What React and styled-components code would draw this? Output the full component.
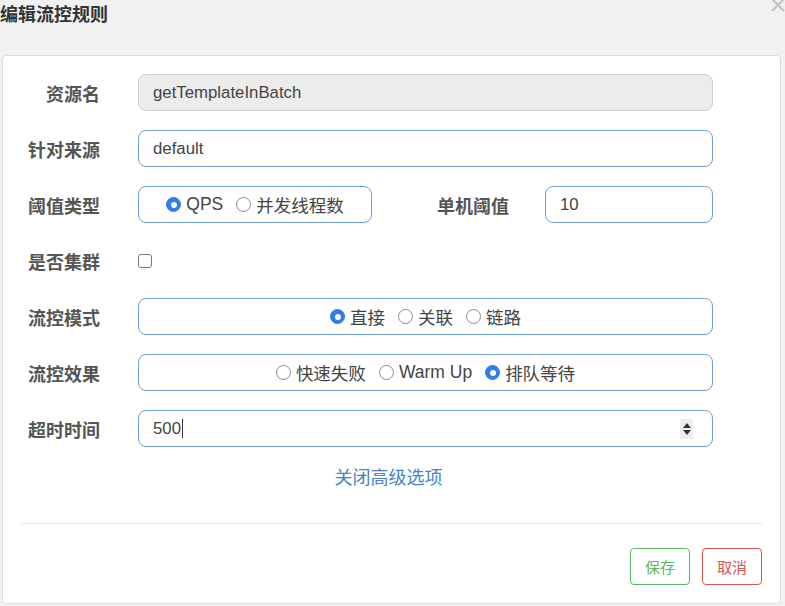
import React from "react";
import styled, { createGlobalStyle } from "styled-components";

const GlobalStyle = createGlobalStyle`
  html, body {
    margin: 0;
    padding: 0;
    background: #f1f1f1;
    font-family: "Liberation Sans", "Noto Sans CJK SC", sans-serif;
  }
`;

const Modal = styled.div`
  position: relative;
  width: 785px;
  height: 606px;
  overflow: hidden;
`;

const Header = styled.div`
  height: 55px;
  display: flex;
  align-items: flex-start;
  padding-top: 5px;
  box-sizing: border-box;
`;

const Title = styled.h1`
  margin: 0;
  font-size: 18px;
  font-weight: 700;
  color: #333;
  line-height: 21px;
`;

const Close = styled.svg`
  position: absolute;
  top: -3px;
  right: -1px;
  width: 16px;
  height: 16px;
`;

const Card = styled.div`
  margin-left: 2px;
  width: 779px;
  height: 549px;
  box-sizing: border-box;
  background: #fff;
  border: 1px solid #dcdcdc;
  border-radius: 4px;
  padding-top: 18px;
  display: flex;
  flex-direction: column;
`;

const Form = styled.div`
  display: flex;
  flex-direction: column;
  gap: 19px;
`;

const Row = styled.div`
  display: flex;
  align-items: center;
  height: 37px;
  padding-right: 67px;
`;

const Label = styled.label`
  width: ${(p) => p.$width || 97}px;
  flex: none;
  text-align: right;
  margin-right: ${(p) => p.$gap || 38}px;
  font-size: 18px;
  font-weight: 600;
  color: #555;
`;

const Input = styled.div`
  flex: ${(p) => (p.$width ? "none" : 1)};
  width: ${(p) => (p.$width ? `${p.$width}px` : "auto")};
  height: 37px;
  box-sizing: border-box;
  border: 1.5px solid ${(p) => (p.$disabled ? "#cfcfcf" : "#6f9fd9")};
  background: ${(p) => (p.$disabled ? "#ececec" : "#fff")};
  border-radius: 8px;
  padding: 0 14px;
  display: flex;
  align-items: center;
  font-size: 16.8px;
  color: #444;
`;

const RadioGroup = styled(Input)`
  justify-content: center;
  gap: 13px;
  padding: 0;
`;

const Option = styled.span`
  display: inline-flex;
  align-items: center;
  gap: 5px;
  font-size: 17.5px;
  color: #444;
`;

const Dot = styled.span`
  width: 15px;
  height: 15px;
  box-sizing: border-box;
  border-radius: 50%;
  border: 1px solid ${(p) => (p.$on ? "#2f7cf0" : "#8a8a8a")};
  background: ${(p) => (p.$on ? "#2f7cf0" : "#fff")};
  display: inline-flex;
  align-items: center;
  justify-content: center;
  &::after {
    content: "";
    width: 6px;
    height: 6px;
    border-radius: 50%;
    background: ${(p) => (p.$on ? "#fff" : "transparent")};
  }
`;

const Checkbox = styled.span`
  width: 14px;
  height: 14px;
  box-sizing: border-box;
  border: 1.5px solid #777;
  border-radius: 3px;
  background: #fff;
`;

const Caret = styled.span`
  display: inline-block;
  width: 1px;
  height: 19px;
  background: #333;
  margin-left: 1px;
`;

const Spinner = styled.span`
  margin-left: auto;
  margin-right: 5px;
  width: 13px;
  height: 20px;
  background: #eee;
  display: flex;
  flex-direction: column;
  align-items: center;
  justify-content: center;
  gap: 2px;
  &::before,
  &::after {
    content: "";
    width: 0;
    height: 0;
    border-left: 4px solid transparent;
    border-right: 4px solid transparent;
  }
  &::before {
    border-bottom: 5px solid #333;
  }
  &::after {
    border-top: 5px solid #333;
  }
`;

const Toggle = styled.div`
  margin-top: 21px;
  text-align: center;
  font-size: 18px;
  line-height: 20px;
  color: #4682c8;
  padding-right: 6px;
`;

const Divider = styled.hr`
  margin: 35px 18px 0;
  border: none;
  border-top: 1.5px solid #e6e6e6;
`;

const Footer = styled.div`
  display: flex;
  justify-content: flex-end;
  gap: 12px;
  padding: 24px 18px 0;
`;

const Button = styled.button`
  width: 60px;
  height: 37px;
  background: #fff;
  border: 1.5px solid ${(p) => p.$color};
  color: ${(p) => p.$color};
  border-radius: 4px;
  font-family: inherit;
  font-size: 15px;
`;

function Radio({ on, children }) {
  return (
    <Option>
      <Dot $on={on} />
      {children}
    </Option>
  );
}

export default function App() {
  return (
    <Modal>
      <GlobalStyle />
      <Header>
        <Title>编辑流控规则</Title>
        <Close viewBox="0 0 16 16" fill="none" stroke="#c2c2c2" strokeWidth="2">
          <path d="M2 2 14 14M14 2 2 14" />
        </Close>
      </Header>
      <Card>
        <Form>
          <Row>
            <Label>资源名</Label>
            <Input $disabled>getTemplateInBatch</Input>
          </Row>
          <Row>
            <Label>针对来源</Label>
            <Input>default</Input>
          </Row>
          <Row>
            <Label>阈值类型</Label>
            <RadioGroup $width={234}>
              <Radio on>QPS</Radio>
              <Radio>并发线程数</Radio>
            </RadioGroup>
            <Label $width={137} $gap={36}>
              单机阈值
            </Label>
            <Input>10</Input>
          </Row>
          <Row>
            <Label>是否集群</Label>
            <Checkbox />
          </Row>
          <Row>
            <Label>流控模式</Label>
            <RadioGroup>
              <Radio on>直接</Radio>
              <Radio>关联</Radio>
              <Radio>链路</Radio>
            </RadioGroup>
          </Row>
          <Row>
            <Label>流控效果</Label>
            <RadioGroup>
              <Radio>快速失败</Radio>
              <Radio>Warm Up</Radio>
              <Radio on>排队等待</Radio>
            </RadioGroup>
          </Row>
          <Row>
            <Label>超时时间</Label>
            <Input>
              500
              <Caret />
              <Spinner />
            </Input>
          </Row>
        </Form>
        <Toggle>关闭高级选项</Toggle>
        <Divider />
        <Footer>
          <Button $color="#5cb85c">保存</Button>
          <Button $color="#d9534f">取消</Button>
        </Footer>
      </Card>
    </Modal>
  );
}
